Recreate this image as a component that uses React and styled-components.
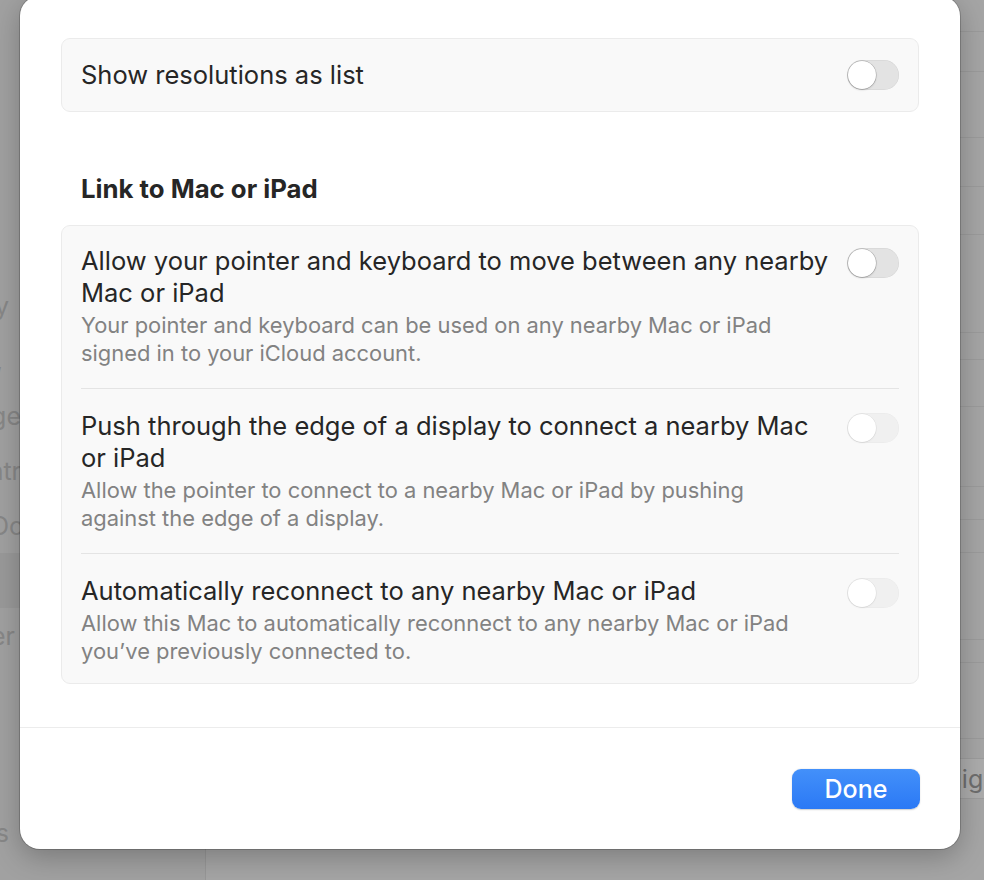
import React from "react";
import styled, { createGlobalStyle } from "styled-components";

const GlobalStyle = createGlobalStyle`
  html, body {
    margin: 0;
    padding: 0;
    background: #a3a3a3;
    font-family: Inter, "Noto Sans", "Liberation Sans", sans-serif;
    -webkit-font-smoothing: antialiased;
  }
  * {
    box-sizing: border-box;
  }
`;

const Screen = styled.div`
  position: relative;
  display: flex;
  width: 984px;
  height: 880px;
  overflow: hidden;
`;

const Sidebar = styled.div`
  width: 206px;
  flex-shrink: 0;
  background: #a1a1a1;
  border-right: 1px solid #979797;
  padding-top: 278px;
  display: flex;
  flex-direction: column;
`;

const SideItem = styled.div`
  height: ${(p) => p.$h || 55}px;
  display: flex;
  align-items: center;
  background: ${(p) => (p.$selected ? "#9a9a9a" : "transparent")};
`;

const SideLabel = styled.span`
  width: ${(p) => p.$end}px;
  display: flex;
  justify-content: flex-end;
  overflow: hidden;
  white-space: nowrap;
  font-size: 25px;
  color: #878787;
`;

const Main = styled.div`
  flex: 1;
  background: #a5a5a5;
  display: flex;
  flex-direction: column;
`;

const MainRow = styled.div`
  height: ${(p) => p.$h}px;
  flex-shrink: 0;
  border-bottom: 1px solid #9b9b9b;
`;

const ButtonRow = styled.div`
  display: flex;
  padding-top: 19px;
  padding-left: 722px;
`;

const GhostButton = styled.div`
  height: 41px;
  padding: 0 14px;
  display: flex;
  align-items: center;
  background: #acacac;
  border: 1px solid #9c9c9c;
  border-radius: 8px;
  font-size: 25px;
  color: #6e6e6e;
  white-space: nowrap;
`;

const Sheet = styled.div`
  position: absolute;
  left: 20px;
  top: -4px;
  width: 940px;
  height: 853px;
  background: #ffffff;
  border-radius: 20px;
  box-shadow: 0 0 0 1px rgba(0, 0, 0, 0.18), 0 8px 28px rgba(0, 0, 0, 0.25);
  display: flex;
  flex-direction: column;
  overflow: hidden;
`;

const Content = styled.div`
  flex: 1;
  padding: 42px 41px 0;
  display: flex;
  flex-direction: column;
`;

const Card = styled.div`
  background: #f9f9f9;
  border: 1px solid #ebebeb;
  border-radius: 9px;
  padding: 0 19px;
`;

const SingleRow = styled.div`
  height: 72px;
  display: flex;
  align-items: center;
  justify-content: space-between;
`;

const Heading = styled.h2`
  margin: 63px 0 22px 20px;
  font-size: 25.75px;
  line-height: 28px;
  font-weight: 700;
  color: #262626;
`;

const Row = styled.div`
  display: flex;
  align-items: flex-start;
  gap: 12px;
  padding-top: ${(p) => (p.$first ? 19 : 21)}px;
  padding-bottom: ${(p) => (p.$last ? 18 : 21)}px;
  border-top: ${(p) => (p.$first ? "none" : "1px solid #e4e4e4")};
`;

const TextCol = styled.div`
  flex: 1;
  display: flex;
  flex-direction: column;
  gap: 2px;
`;

const Title = styled.div`
  font-size: 25.5px;
  line-height: 32px;
  color: #262626;
  white-space: pre-line;
`;

const Subtitle = styled.div`
  font-size: 21.9px;
  line-height: 28px;
  color: #828282;
  white-space: pre-line;
`;

const Toggle = styled.div`
  position: relative;
  flex-shrink: 0;
  width: 52px;
  height: 30px;
  margin-top: ${(p) => (p.$inline ? "0" : "3px")};
  border-radius: 15px;
  background: ${(p) => (p.$disabled ? "#f0f0f0" : "#e3e3e3")};
  box-shadow: inset 0 0 0 0.5px rgba(0, 0, 0, ${(p) => (p.$disabled ? 0.03 : 0.08)});

  &::after {
    content: "";
    position: absolute;
    left: 1px;
    top: 1px;
    width: 28px;
    height: 28px;
    border-radius: 50%;
    background: #ffffff;
    box-shadow: 0 0 0 0.5px rgba(0, 0, 0, ${(p) => (p.$disabled ? 0.08 : 0.25)}),
      0 1px 2px rgba(0, 0, 0, ${(p) => (p.$disabled ? 0.06 : 0.18)});
  }
`;

const Footer = styled.div`
  border-top: 1px solid #ececec;
  padding: 41px 40px 40px;
  display: flex;
  justify-content: flex-end;
`;

const DoneButton = styled.button`
  width: 128px;
  height: 40px;
  border: none;
  border-radius: 9px;
  background: linear-gradient(#4390fa, #2b79f5);
  box-shadow: 0 0.5px 1.5px rgba(0, 0, 0, 0.2);
  color: #ffffff;
  font-family: inherit;
  font-size: 25px;
  font-weight: 500;
  cursor: pointer;
`;

const sideItems = [
  { label: "Accessibility", end: 9 },
  { label: "Control Centre,", end: 3 },
  { label: "Language", end: 21 },
  { label: "Contr", end: 21 },
  { label: "Desktop & Do", end: 24 },
  { label: "Displays", end: 0, selected: true },
  { label: "Screen Saver", end: 15 },
  { label: "", end: 0 },
  { label: "", end: 0 },
  { label: "", end: 0, h: 32 },
  { label: "Notifications", end: 9 },
];

const mainRows = [32, 40, 66, 49, 48, 98, 27, 47, 80, 33, 33, 87, 23, 76];

const linkRows = [
  {
    title: "Allow your pointer and keyboard to move between any nearby\nMac or iPad",
    text: "Your pointer and keyboard can be used on any nearby Mac or iPad\nsigned in to your iCloud account.",
  },
  {
    title: "Push through the edge of a display to connect a nearby Mac\nor iPad",
    text: "Allow the pointer to connect to a nearby Mac or iPad by pushing\nagainst the edge of a display.",
    disabled: true,
  },
  {
    title: "Automatically reconnect to any nearby Mac or iPad",
    text: "Allow this Mac to automatically reconnect to any nearby Mac or iPad\nyou\u2019ve previously connected to.",
    disabled: true,
  },
];

export default function App() {
  return (
    <Screen>
      <GlobalStyle />
      <Sidebar>
        {sideItems.map((item, i) => (
          <SideItem key={i} $selected={item.selected} $h={item.h}>
            <SideLabel $end={item.end}>{item.label}</SideLabel>
          </SideItem>
        ))}
      </Sidebar>
      <Main>
        {mainRows.map((h, i) => (
          <MainRow key={i} $h={h} />
        ))}
        <ButtonRow>
          <GhostButton>Night Shift…</GhostButton>
        </ButtonRow>
      </Main>

      <Sheet>
        <Content>
          <Card>
            <SingleRow>
              <Title>Show resolutions as list</Title>
              <Toggle $inline />
            </SingleRow>
          </Card>

          <Heading>Link to Mac or iPad</Heading>

          <Card>
            {linkRows.map((row, i) => (
              <Row key={i} $first={i === 0} $last={i === linkRows.length - 1}>
                <TextCol>
                  <Title>{row.title}</Title>
                  <Subtitle>{row.text}</Subtitle>
                </TextCol>
                <Toggle $disabled={row.disabled} />
              </Row>
            ))}
          </Card>
        </Content>
        <Footer>
          <DoneButton>Done</DoneButton>
        </Footer>
      </Sheet>
    </Screen>
  );
}
